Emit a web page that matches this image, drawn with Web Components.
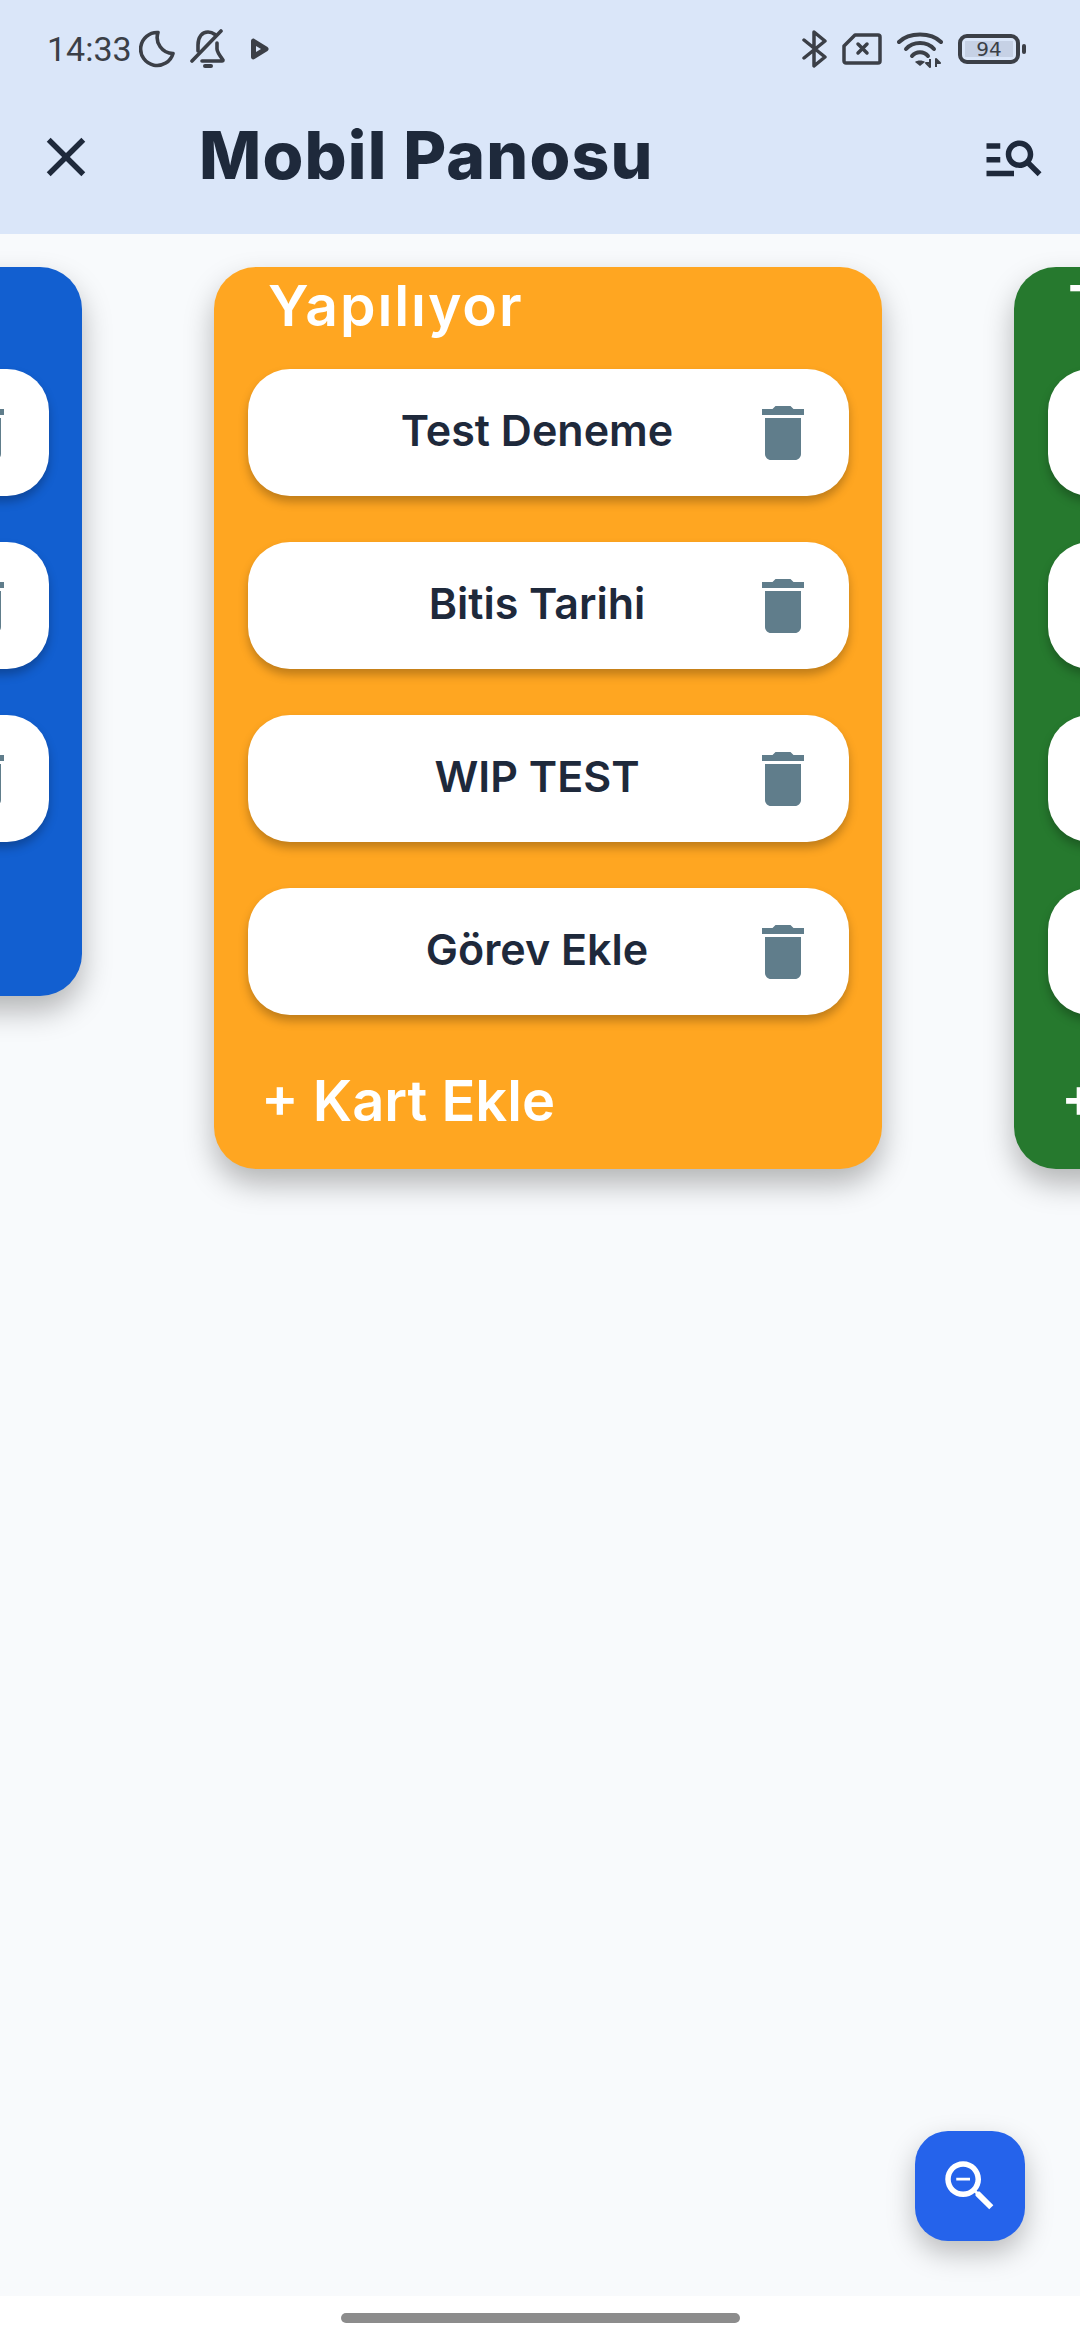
<!DOCTYPE html>
<html lang="tr">
<head>
<meta charset="utf-8">
<title>Mobil Panosu</title>
<style>
    html, body { margin: 0; height: 100%; overflow: hidden; }
    body {
        display: flex;
        flex-direction: column;
        width: 1080px;
        height: 2340px;
        background: #ffffff;
        font-family: Inter, "Noto Sans", sans-serif;
    }
</style>
</head>
<body>
<app-header title="Mobil Panosu"></app-header>
<board-view>
    <board-column color="#125fd0" tail="154">
        <task-card></task-card>
        <task-card></task-card>
        <task-card></task-card>
    </board-column>
    <board-column title="Yapılıyor" add="+ Kart Ekle" color="#ffa621" tail="154">
        <task-card>Test Deneme</task-card>
        <task-card>Bitis Tarihi</task-card>
        <task-card>WIP TEST</task-card>
        <task-card>Görev Ekle</task-card>
    </board-column>
    <board-column title="Tamamlandı" add="+ Kart Ekle" color="#26792e" tail="154">
        <task-card></task-card>
        <task-card></task-card>
        <task-card></task-card>
        <task-card></task-card>
    </board-column>
    <zoom-fab slot="over"></zoom-fab>
</board-view>
<home-bar></home-bar>

<script>
const ICONS = {
    close: 'M19 6.41 17.59 5 12 10.59 6.41 5 5 6.41 10.59 12 5 17.59 6.41 19 12 13.41 17.59 19 19 17.59 13.41 12z',
    manageSearch: 'M7 9H2V7h5v2zm0 3H2v2h5v-2zm13.59 7l-3.83-3.83c-.8.52-1.74.83-2.76.83-2.76 0-5-2.24-5-5s2.24-5 5-5 5 2.24 5 5c0 1.02-.31 1.96-.83 2.75L22 17.59 20.59 19zM17 11c0-1.65-1.35-3-3-3s-3 1.35-3 3 1.35 3 3 3 3-1.35 3-3zM2 19h10v-2H2v2z',
    trash: 'M6 19c0 1.1.9 2 2 2h8c1.1 0 2-.9 2-2V7H6v12zM19 4h-3.5l-1-1h-5l-1 1H5v2h14V4z',
    zoomOut: 'M15.5 14h-.79l-.28-.27C15.41 12.59 16 11.11 16 9.5 16 5.91 13.09 3 9.5 3S3 5.91 3 9.5 5.91 16 9.5 16c1.61 0 3.09-.59 4.23-1.57l.27.28v.79l5 4.99L20.49 19l-4.99-5zm-6 0C7.01 14 5 11.99 5 9.5S7.01 5 9.5 5 14 7.01 14 9.5 11.99 14 9.5 14zM7 9h5v1H7z'
};

const icon = (name, size) => `<svg width="${size}" height="${size}" viewBox="0 0 24 24" fill="currentColor"><path d="${ICONS[name]}"/></svg>`;

class StatusBar extends HTMLElement {
    constructor() {
        super();
        this.attachShadow({ mode: 'open' });
        this.shadowRoot.innerHTML = `
            <style>
                :host {
                    display: flex;
                    align-items: center;
                    box-sizing: border-box;
                    height: 80px;
                    padding: 18px 54px 0 47px;
                    color: #3b3f47;
                    font-family: Roboto, sans-serif;
                }
                svg { display: block; flex: none; }
                .time { font-size: 34px; width: 92px; }
                .spacer { flex: 1; }
                .battery {
                    display: flex;
                    align-items: center;
                    gap: 2px;
                    margin-left: 15px;
                }
                .shell {
                    box-sizing: border-box;
                    width: 62px;
                    height: 30px;
                    border: 4px solid #3b3f47;
                    border-radius: 9px;
                    padding: 3px;
                    display: flex;
                }
                .level {
                    flex: 1;
                    background: #c6d1e5;
                    font: 20px/16px "DejaVu Sans", sans-serif;
                    text-align: center;
                }
                .nub { width: 4px; height: 10px; border-radius: 2px; background: #3b3f47; }
            </style>
            <span class="time">14:33</span>
            <svg width="36" height="38" viewBox="0 0 36 38" fill="none" stroke="currentColor" stroke-width="3.6">
                <path d="M19 2.500A16.500 16.500 0 1 0 34 23.500 16 16 0 0 1 19 2.500Z" stroke-linejoin="round"/>
            </svg>
            <svg style="margin-left:15px" width="36" height="40" viewBox="0 0 36 40" fill="none" stroke="currentColor" stroke-width="3.6" stroke-linecap="round" stroke-linejoin="round">
                <path d="M8 22V16C8 8 12 3 18 3c3 0 5 1 7 2.500M27 14v6c0 3 3 7 6 11 0 1 0 1-1 1H12"/>
                <path d="M2 32 31 2"/>
                <path d="M15 37h6" stroke-width="4"/>
            </svg>
            <svg style="margin-left:25px" width="18" height="22" viewBox="0 0 18 22" fill="currentColor">
                <path d="M0 3c0-2 2-3 3.500-2L16.500 9c1.500 1 1.500 3 0 4L3.500 21C2 22 0 21 0 19Z"/>
                <path d="M5 8v6l5-3Z" fill="#dae6f9"/>
            </svg>
            <span class="spacer"></span>
            <svg width="25" height="40" viewBox="0 0 25 40" fill="none" stroke="currentColor" stroke-width="3.5" stroke-linecap="round" stroke-linejoin="round">
                <path d="M2 11 23 28 12 37V3L23 12 2 29"/>
            </svg>
            <svg style="margin-left:15px" width="40" height="32" viewBox="0 0 40 32" fill="none" stroke="currentColor" stroke-width="3.5" stroke-linejoin="round">
                <path d="M13 2H36a2 2 0 0 1 2 2V28a2 2 0 0 1-2 2H4a2 2 0 0 1-2-2V13Z"/>
                <path d="M16 11 25 20M25 11 16 20" stroke-linecap="round"/>
            </svg>
            <svg style="margin-left:15px" width="46" height="37" viewBox="0 0 46 37" fill="none" stroke="currentColor" stroke-width="4" stroke-linecap="round">
                <path d="M2 11C12 1 34 1 44 11"/>
                <path d="M9 18C16 10 30 10 37 18"/>
                <path d="M15 25C19 20 27 20 31 25"/>
                <path d="M23 35 18 31C20 29 26 29 28 31Z" fill="currentColor" stroke="none"/>
                <path d="M33 28v8l-4-4h4M39 36v-8l4 4h-4" stroke-width="2" stroke-linecap="butt" stroke-linejoin="round"/>
            </svg>
            <div class="battery">
                <div class="shell"><div class="level">94</div></div>
                <div class="nub"></div>
            </div>
        `;
    }
}

class AppHeader extends HTMLElement {
    constructor() {
        super();
        this.attachShadow({ mode: 'open' });
        this.shadowRoot.innerHTML = `
            <style>
                :host {
                    display: block;
                    flex: none;
                    height: 234px;
                    background: #dae6f9;
                    color: #1e293b;
                }
                .bar {
                    display: flex;
                    align-items: center;
                    height: 154px;
                    padding: 0 33px;
                }
                svg { display: block; flex: none; }
                h1 {
                    flex: 1;
                    margin: -4px 0 0 100px;
                    font-size: 66px;
                    font-weight: 800;
                    letter-spacing: 1.2px;
                }
            </style>
            <status-bar></status-bar>
            <div class="bar">
                ${icon('close', 66)}
                <h1></h1>
                ${icon('manageSearch', 66)}
            </div>
        `;
        this.shadowRoot.querySelector('h1').textContent = this.getAttribute('title');
    }
}

class BoardView extends HTMLElement {
    constructor() {
        super();
        this.attachShadow({ mode: 'open' });
        this.shadowRoot.innerHTML = `
            <style>
                :host {
                    display: block;
                    position: relative;
                    flex: 1;
                    overflow: hidden;
                    background: #f8fafc;
                }
                .track {
                    display: flex;
                    align-items: flex-start;
                    gap: 132px;
                    width: max-content;
                    margin-left: -586px;
                    padding-top: 33px;
                }
            </style>
            <div class="track"><slot></slot></div>
            <slot name="over"></slot>
        `;
    }
}

class BoardColumn extends HTMLElement {
    constructor() {
        super();
        this.attachShadow({ mode: 'open' });
        this.shadowRoot.innerHTML = `
            <style>
                :host {
                    display: block;
                    box-sizing: border-box;
                    width: 668px;
                    border-radius: 42px;
                    color: #ffffff;
                    box-shadow: 0 15px 30px rgba(0, 0, 0, 0.28);
                }
                h2 {
                    margin: 0;
                    height: 102px;
                    padding-left: 54px;
                    font-size: 57px;
                    line-height: 78px;
                    font-weight: 600;
                    letter-spacing: 1.9px;
                    white-space: nowrap;
                }
                .list {
                    display: flex;
                    flex-direction: column;
                    gap: 46px;
                    padding: 0 33px 0 34px;
                }
                .add {
                    display: flex;
                    align-items: center;
                    box-sizing: border-box;
                    padding: 18px 0 0 47px;
                    font-size: 56px;
                    font-weight: 600;
                    white-space: nowrap;
                }
            </style>
            <h2></h2>
            <div class="list"><slot></slot></div>
            <div class="add"></div>
        `;
        this.style.background = this.getAttribute('color');
        this.shadowRoot.querySelector('h2').textContent = this.getAttribute('title');
        const add = this.shadowRoot.querySelector('.add');
        add.textContent = this.getAttribute('add');
        add.style.height = this.getAttribute('tail') + 'px';
    }
}

class TaskCard extends HTMLElement {
    constructor() {
        super();
        this.attachShadow({ mode: 'open' });
        this.shadowRoot.innerHTML = `
            <style>
                :host {
                    display: flex;
                    align-items: center;
                    box-sizing: border-box;
                    height: 127px;
                    padding: 0 30px 0 79px;
                    border-radius: 42px;
                    background: #ffffff;
                    color: #1e293b;
                    box-shadow: 0 6px 10px rgba(0, 0, 0, 0.25);
                }
                .text {
                    flex: 1;
                    text-align: center;
                    font-size: 43px;
                    font-weight: 600;
                    margin-top: -6px;
                }
                svg { display: block; flex: none; color: #607d8b; }
            </style>
            <span class="text"><slot></slot></span>
            ${icon('trash', 72)}
        `;
    }
}

class ZoomFab extends HTMLElement {
    constructor() {
        super();
        this.attachShadow({ mode: 'open' });
        this.shadowRoot.innerHTML = `
            <style>
                :host {
                    position: absolute;
                    right: 55px;
                    bottom: 55px;
                    display: flex;
                    align-items: center;
                    justify-content: center;
                    width: 110px;
                    height: 110px;
                    border-radius: 33px;
                    background: #2563eb;
                    color: #ffffff;
                    box-shadow: 0 12px 28px rgba(0, 0, 0, 0.25);
                }
                svg { display: block; }
            </style>
            ${icon('zoomOut', 66)}
        `;
    }
}

class HomeBar extends HTMLElement {
    constructor() {
        super();
        this.attachShadow({ mode: 'open' });
        this.shadowRoot.innerHTML = `
            <style>
                :host {
                    display: flex;
                    flex: none;
                    justify-content: center;
                    box-sizing: border-box;
                    height: 44px;
                    padding-top: 17px;
                    background: #ffffff;
                }
                div { width: 399px; height: 10px; border-radius: 5px; background: #8c8c8c; }
            </style>
            <div></div>
        `;
    }
}

customElements.define('status-bar', StatusBar);
customElements.define('app-header', AppHeader);
customElements.define('board-view', BoardView);
customElements.define('board-column', BoardColumn);
customElements.define('task-card', TaskCard);
customElements.define('zoom-fab', ZoomFab);
customElements.define('home-bar', HomeBar);
</script>
</body>
</html>
